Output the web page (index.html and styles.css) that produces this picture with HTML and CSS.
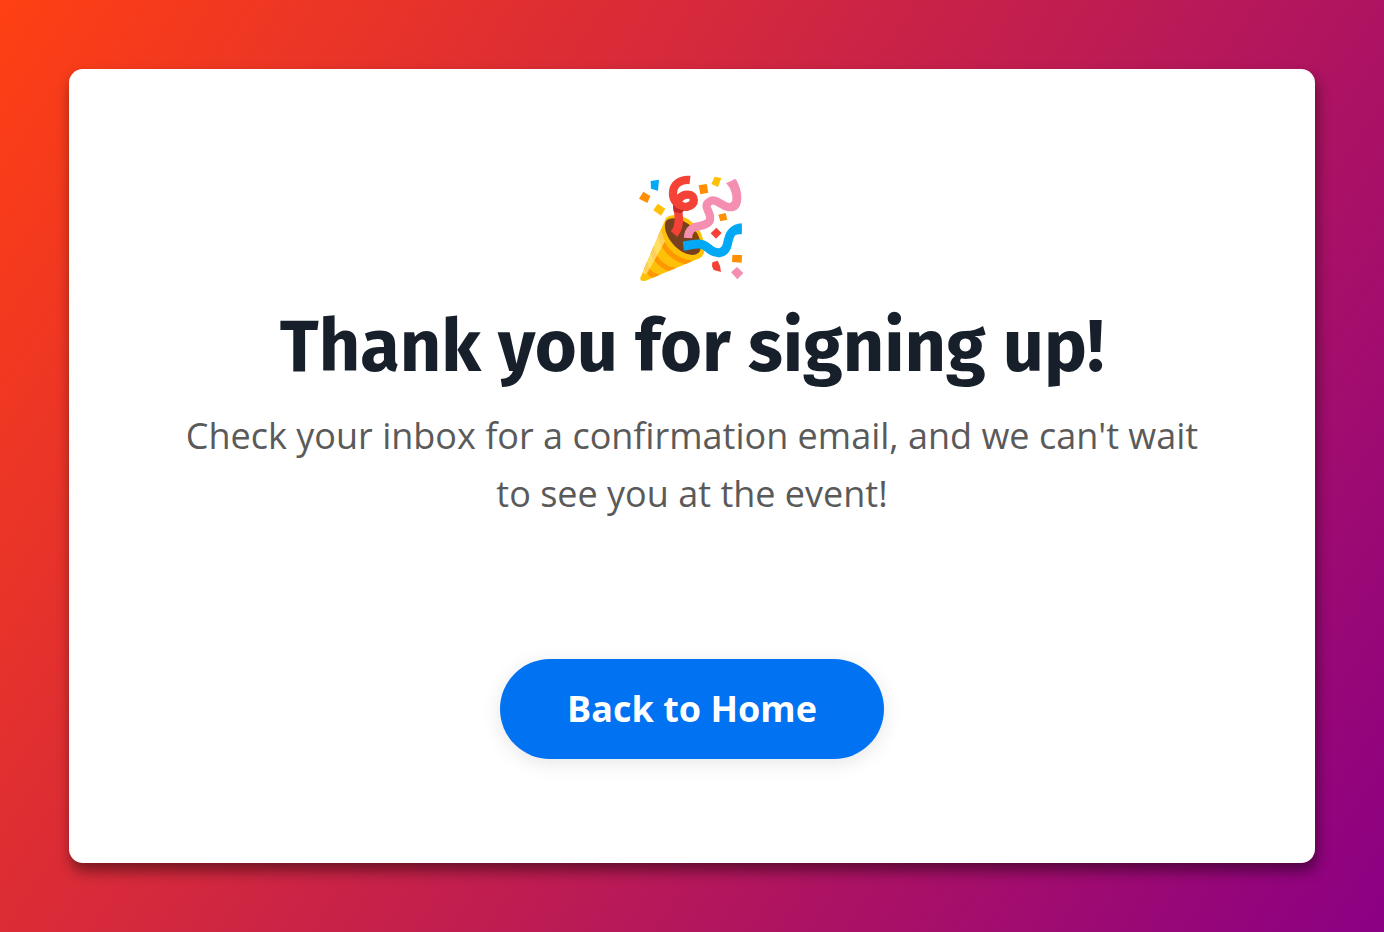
FILE: index.html
```html
<!DOCTYPE html>
<html lang="en">
<head>
  <meta charset="UTF-8">
  <meta name="viewport" content="width=device-width, initial-scale=1.0">
  <title>Thank you for signing up!</title>
  <link rel="stylesheet" href="styles.css">
</head>
<body>

<main class="card">
  <svg class="party" viewBox="0 0 372 372" role="img" aria-label="Party popper">
    <defs>
      <clipPath id="cone">
        <path d="M108 158 Q120 149 137 150 Q180 154 208 195 Q224 222 223 259 Q221 274 208 280 L47 347 Q29 351 31 338 Z"/>
      </clipPath>
    </defs>
    <!-- cone -->
    <g clip-path="url(#cone)">
      <path fill="#ffc107" d="M20 140H240V360H20z"/>
      <path fill="none" stroke="#ff8f00" stroke-opacity=".85" stroke-width="15" d="M88 192 C90 246 128 286 184 294 M64 245 C70 282 98 311 137 316 M43 290 C48 316 64 332 86 336"/>
      <path fill="#fff59d" fill-opacity=".6" d="M94 190 Q98 215 105 229 L52 324 Q42 333 39 322 Z"/>
    </g>
    <path fill="#78401f" d="M110 166 C127 151 164 163 190 190 C214 216 218 251 205 264 C187 278 150 265 127 235 C105 207 99 179 110 166z"/>
    <path fill="#8a4500" d="M171 174 C204 197 219 239 208 261 Q200 231 171 174z"/>
    <!-- streamers -->
    <path fill="none" stroke="#f44336" stroke-width="25" d="M180 45 C153 42 130 57 129 83 C127 109 150 129 173 125 C199 120 196 89 175 89 C155 87 138 105 142 128 C149 158 148 190 132 207"/>
    <path fill="#c62828" d="M129 119 Q142 134 163 136 L155 144 Q142 145 131 139z"/>
    <path fill="none" stroke="#f48fb1" stroke-width="25" d="M174 219 C176 171 222 192 238 169 C251 147 214 125 238 110 C258 97 272 122 294 126 C325 130 329 90 304 48"/>
    <path fill="#f48fb1" d="M288 54 L318 43 Q334 73 334 98 Q333 137 304 139 Q287 137 278 129 L291 115 Q320 120 300 70z"/>
    <path fill="none" stroke="#03a9f4" stroke-width="27" d="M160 243 C192 239 212 229 233 248 C256 269 284 270 292 239 C298 205 306 192 335 191"/>
    <path fill="#03a9f4" d="M300 190 Q312 177 335 175V208Q313 206 304 216z"/>
    <!-- confetti -->
    <path fill="#03a9f4" d="M62 48L87 44 84 77 63 71z"/>
    <path fill="#ff8f00" d="M40 80L61 93 52 114 27 101zM206 61L230 57 235 83 211 88zM265 149L287 144 292 164 271 169zM307 270L336 270 335 293 306 291z"/>
    <path fill="#ffc107" d="M83 116L106 131 93 152 70 136zM254 35L274 39 264 66 244 57z"/>
    <path fill="#f44336" d="M259 188L275 204 258 221 242 205zM247 292L263 287 Q272 301 273 321L251 315 246 304z"/>
    <path fill="#f48fb1" d="M321 306L340 324 322 343 303 322z"/>
  </svg>
  <h1>Thank you for signing up!</h1>
  <p>Check your inbox for a confirmation email, and we can't wait to see you at the event!</p>
  <a class="home-link" href="index.html">Back to Home</a>
</main>

</body>
</html>
```
FILE: styles.css
```css
* {
  box-sizing: border-box;
}

body {
  margin: 0;
  padding: 5vw;
  min-height: 100vh;
  display: flex;
  font-family: "Open Sans", "Noto Sans", sans-serif;
  background: linear-gradient(123deg, #ff4013, #8b0084);
}

.card {
  flex: 1;
  padding: 96px 104px 104px;
  display: flex;
  flex-direction: column;
  align-items: center;
  justify-content: center;
  background: #fff;
  border-radius: 14px;
  box-shadow: 2px 8px 14px rgba(0, 0, 0, 0.45);
  text-align: center;
}

.party {
  width: 124px;
  height: 124px;
}

h1 {
  margin: 16px 0 18px;
  font-family: "Fira Sans", "Open Sans", sans-serif;
  font-size: 72px;
  font-weight: 700;
  line-height: 84px;
  color: #171f2b;
}

p {
  margin: 0 0 136px;
  font-size: 36px;
  line-height: 58px;
  color: #5a5a5a;
}

.home-link {
  padding: 24px 67px;
  font-size: 36px;
  font-weight: 700;
  line-height: 52px;
  color: #fff;
  text-decoration: none;
  background: #0072f2;
  border-radius: 50px;
  box-shadow: 0 4px 20px rgba(0, 0, 0, 0.1);
}

.home-link:hover {
  background: #005fcc;
}

@media (max-width: 600px) {
  .card {
    padding: 32px 24px;
  }

  h1 {
    font-size: 36px;
    line-height: 44px;
  }

  p {
    margin-bottom: 48px;
    font-size: 20px;
    line-height: 32px;
  }

  .home-link {
    padding: 16px 32px;
    font-size: 20px;
    line-height: 28px;
  }
}
```
